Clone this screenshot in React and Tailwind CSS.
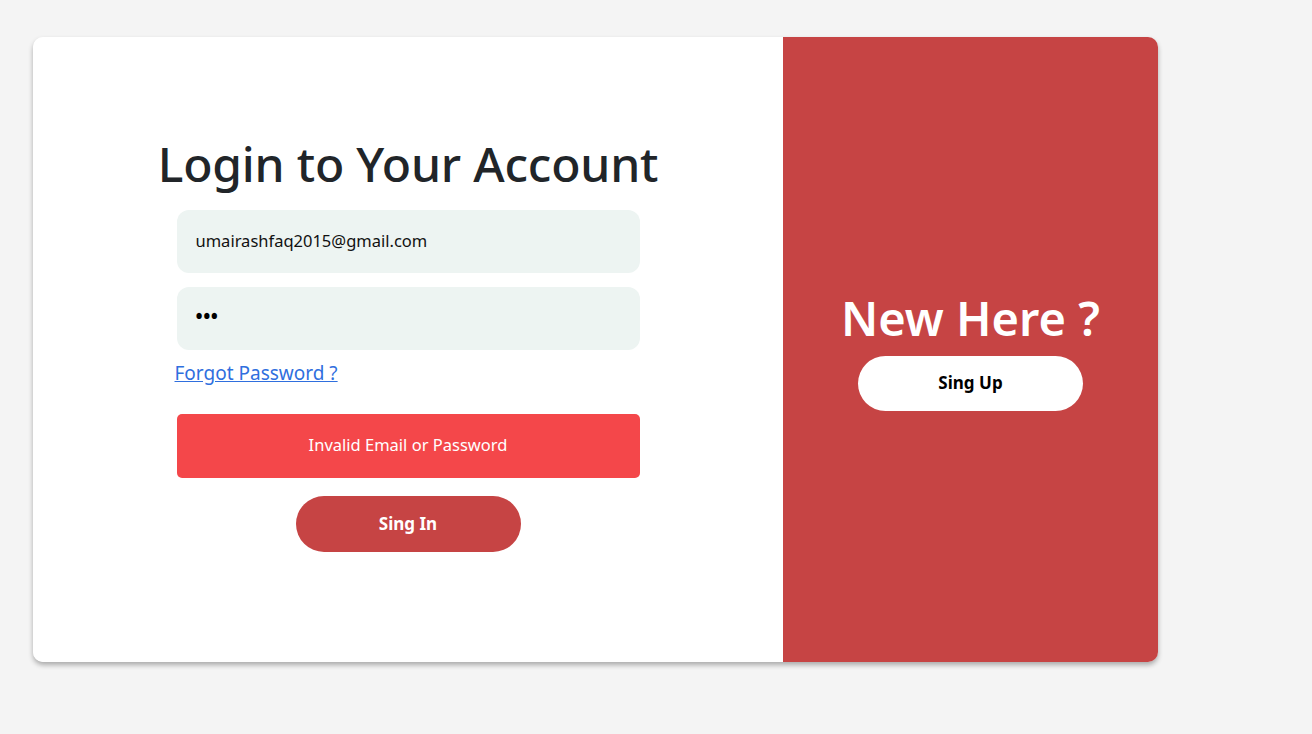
export default function App() {
  return (
    <div className="min-h-[734px] w-full bg-[#f4f4f4] pt-[37px] pl-[33px]" style={{ fontFamily: '"Noto Sans", "Open Sans", sans-serif' }}>
      <div className="flex w-[1125px] h-[625px] rounded-[10px] overflow-hidden shadow-[0_3px_5px_rgba(0,0,0,0.3)]">
        <div className="w-[750px] bg-white flex flex-col items-center justify-center pt-[4px]">
          <h1 className="text-[48px] leading-[58px] font-medium text-[#212529] tracking-[-0.2px] mb-[17px] -mt-[16px]">Login to Your Account</h1>
          <div className="w-[463px] h-[63px] rounded-[12px] bg-[#edf4f2] flex items-center px-[19px] text-[16.5px] text-[#111]">umairashfaq2015@gmail.com</div>
          <div className="w-[463px] h-[63px] rounded-[12px] bg-[#edf4f2] flex items-center px-[19px] mt-[14px] text-[19px] font-bold text-black tracking-[0.5px] leading-none pb-[4px]">•••</div>
          <div className="w-[467px] mt-[9px]">
            <a href="#" className="text-[19px] text-[#2f6fde] underline">Forgot Password ?</a>
          </div>
          <div className="w-[463px] h-[64px] rounded-[5px] bg-[#f4474a] flex items-center justify-center mt-[26px] text-[16.5px] text-white">Invalid Email or Password</div>
          <button className="w-[225px] h-[56px] rounded-full bg-[#c64444] text-white font-bold text-[17px] mt-[18px]">Sing In</button>
        </div>
        <div className="w-[375px] bg-[#c64444] flex flex-col items-center justify-center">
          <h2 className="text-[47px] leading-[58px] font-semibold text-white">New Here ?</h2>
          <button className="w-[225px] h-[55px] rounded-full bg-white text-black font-bold text-[17px] mt-[9px]">Sing Up</button>
        </div>
      </div>
    </div>
  );
}
